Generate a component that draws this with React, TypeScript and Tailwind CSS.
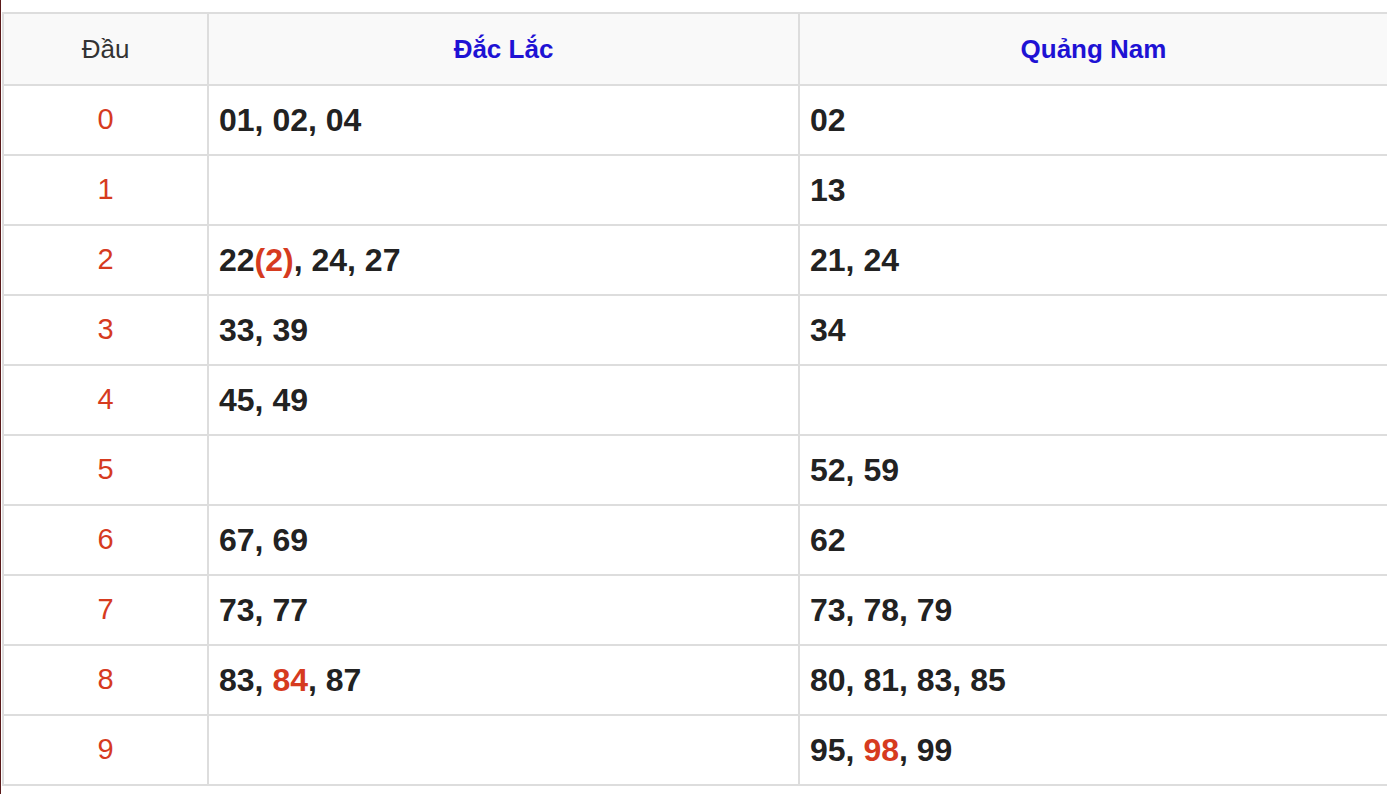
import React from "react";

type Part = { t: string; red?: boolean };

const rows: { head: string; a: Part[]; b: Part[] }[] = [
  { head: "0", a: [{ t: "01, 02, 04" }], b: [{ t: "02" }] },
  { head: "1", a: [], b: [{ t: "13" }] },
  { head: "2", a: [{ t: "22" }, { t: "(2)", red: true }, { t: ", 24, 27" }], b: [{ t: "21, 24" }] },
  { head: "3", a: [{ t: "33, 39" }], b: [{ t: "34" }] },
  { head: "4", a: [{ t: "45, 49" }], b: [] },
  { head: "5", a: [], b: [{ t: "52, 59" }] },
  { head: "6", a: [{ t: "67, 69" }], b: [{ t: "62" }] },
  { head: "7", a: [{ t: "73, 77" }], b: [{ t: "73, 78, 79" }] },
  { head: "8", a: [{ t: "83, " }, { t: "84", red: true }, { t: ", 87" }], b: [{ t: "80, 81, 83, 85" }] },
  { head: "9", a: [], b: [{ t: "95, " }, { t: "98", red: true }, { t: ", 99" }] },
];

function Nums({ parts }: { parts: Part[] }) {
  return (
    <span className="whitespace-pre">
      {parts.map((p, i) => (
        <span key={i} className={p.red ? "text-[#d63b1f]" : "text-[#222222]"}>
          {p.t}
        </span>
      ))}
    </span>
  );
}

export default function App() {
  return (
    <div className="flex h-[794px] w-[1387px] overflow-hidden bg-white font-['Liberation_Sans',Arial,sans-serif]">
      <div className="w-[1px] shrink-0 bg-[#5a1a1a]" />
      <div className="ml-[1px] flex-1 pt-[12px]">
        <div className="grid grid-cols-[205px_591px_1fr] border-l-2 border-t-2 border-[#dddddd]">
          <div className="flex h-[72px] items-center justify-center border-b-2 border-r-2 border-[#dddddd] bg-[#f9f9f9] text-[26px] text-[#333333]">
            Đầu
          </div>
          <div className="flex h-[72px] items-center justify-center border-b-2 border-r-2 border-[#dddddd] bg-[#f9f9f9] text-[26px] font-bold text-[#1e12d4]">
            Đắc Lắc
          </div>
          <div className="flex h-[72px] items-center justify-center border-b-2 border-[#dddddd] bg-[#f9f9f9] text-[26px] font-bold text-[#1e12d4]">
            Quảng Nam
          </div>
          {rows.map((r) => (
            <React.Fragment key={r.head}>
              <div className="flex h-[70px] items-center justify-center border-b-2 border-r-2 border-[#dddddd] text-[29px] text-[#d63b1f]">
                {r.head}
              </div>
              <div className="flex h-[70px] items-center border-b-2 border-r-2 border-[#dddddd] pl-[10px] text-[32px] font-bold">
                <Nums parts={r.a} />
              </div>
              <div className="flex h-[70px] items-center border-b-2 border-[#dddddd] pl-[10px] text-[32px] font-bold">
                <Nums parts={r.b} />
              </div>
            </React.Fragment>
          ))}
        </div>
      </div>
    </div>
  );
}
